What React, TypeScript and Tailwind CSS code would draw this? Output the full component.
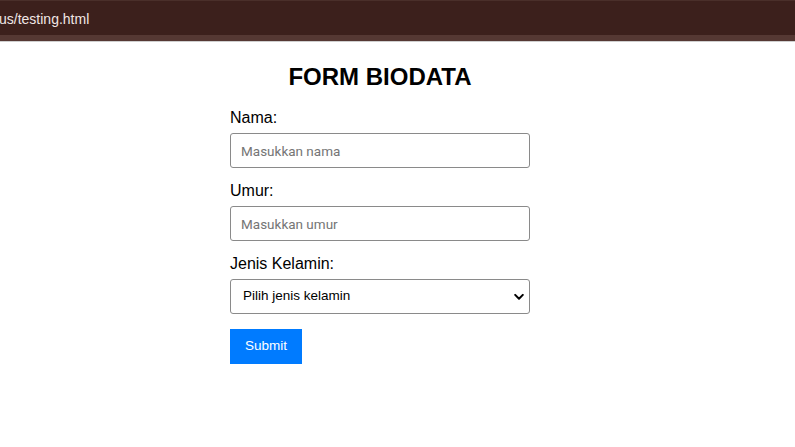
import React from 'react';

const App: React.FC = () => {
  return (
    <div className="min-h-screen bg-white" style={{ fontFamily: '"Liberation Sans", Arial, sans-serif' }}>
      {/* browser address strip */}
      <div className="h-[42px] flex flex-col">
        <div className="h-px bg-[#4a2f2a]" />
        <div className="h-[34px] bg-[#3c201c] flex items-center">
          <span className="text-[14px] leading-none text-[#f0e6e4] -ml-px pt-[2px]">us/testing.html</span>
        </div>
        <div className="h-[6px] bg-[#553833]" />
        <div className="h-px bg-[#cfcfcf]" />
      </div>

      <div className="ml-[230px] w-[300px] pt-[21px]">
        <h1 className="text-center text-[24px] leading-[27px] font-bold text-black">FORM BIODATA</h1>

        <form className="mt-[19px] flex flex-col" onSubmit={(e) => e.preventDefault()}>
          <label className="text-[16px] leading-[18px] text-black mb-[6px]">Nama:</label>
          <input
            type="text"
            placeholder="Masukkan nama"
            className="h-[35px] w-full border border-[#8a8a8a] rounded-[3px] px-[10px] text-[13.5px] font-['Roboto',sans-serif] placeholder:text-[#757575] focus:outline-none"
          />

          <label className="mt-[14px] text-[16px] leading-[18px] text-black mb-[6px]">Umur:</label>
          <input
            type="number"
            placeholder="Masukkan umur"
            className="h-[35px] w-full border border-[#8a8a8a] rounded-[3px] px-[10px] text-[13.5px] font-['Roboto',sans-serif] placeholder:text-[#757575] focus:outline-none"
          />

          <label className="mt-[14px] text-[16px] leading-[18px] text-black mb-[6px]">Jenis Kelamin:</label>
          <div className="relative">
            <select
              defaultValue=""
              className="appearance-none h-[35px] w-full border border-[#8a8a8a] rounded-[3px] pl-[12px] pr-8 text-[13.5px] text-black bg-white focus:outline-none"
            >
              <option value="">Pilih jenis kelamin</option>
              <option value="L">Laki-laki</option>
              <option value="P">Perempuan</option>
            </select>
            <svg
              className="pointer-events-none absolute right-[6px] top-1/2 -translate-y-1/2"
              width="10"
              height="7"
              viewBox="0 0 10 7"
              fill="none"
            >
              <path d="M1.2 1.4 L5 5.2 L8.8 1.4" stroke="#000" strokeWidth="2" strokeLinecap="round" strokeLinejoin="round" />
            </svg>
          </div>

          <button
            type="submit"
            className="mt-[15px] self-start h-[35px] w-[72px] bg-[#007bff] text-white text-[13.5px]"
          >
            Submit
          </button>
        </form>
      </div>
    </div>
  );
};

export default App;
